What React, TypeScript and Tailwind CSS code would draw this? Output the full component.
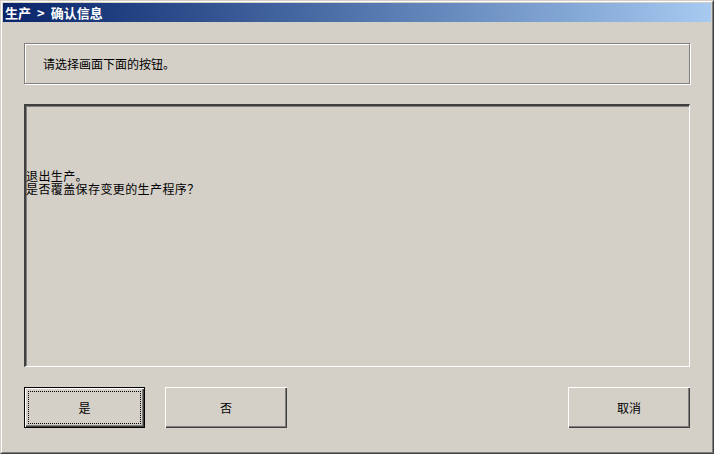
import React from "react";

const font = { fontFamily: '"Noto Sans CJK SC", "Noto Sans", sans-serif' };

function Btn({ label, def }: { label: string; def?: boolean }) {
  return (
    <button
      className={
        def
          ? "w-[121px] h-[41px] border border-black bg-[#d4d0c8] text-[12px] text-black shadow-[inset_1px_1px_0_#fff,inset_-1px_-1px_0_#404040,inset_-2px_-2px_0_#808080] outline-1 outline-dotted outline-black outline-offset-[-5px] flex items-center justify-center"
          : "w-[122px] h-[41px] bg-[#d4d0c8] text-[12px] text-black shadow-[inset_1px_1px_0_#fff,inset_-1px_-1px_0_#404040,inset_-2px_-2px_0_#808080] flex items-center justify-center"
      }
    >
      {label}
    </button>
  );
}

export default function App() {
  return (
    <div
      className="w-[714px] h-[454px] bg-[#d4d0c8] border border-t-[#d4d0c8] border-l-[#d4d0c8] border-r-[#404040] border-b-[#404040]"
      style={font}
    >
      <div className="w-full h-full border border-t-white border-l-white border-r-[#808080] border-b-[#808080] p-px flex flex-col">
        <div className="h-[19px] bg-gradient-to-r from-[#0a246a] to-[#a6caf0] flex items-center pl-[2px] text-white text-[13px] font-bold leading-none gap-[6px]">
          <span>生产</span>
          <span>&gt;</span>
          <span>确认信息</span>
        </div>
        <div className="flex flex-col px-[21px] pt-[21px]">
          <div className="h-[41px] border border-[#808080] shadow-[inset_1px_1px_0_#fff,1px_1px_0_#fff] flex items-center pl-[18px] text-[12px] text-black">
            请选择画面下面的按钮。
          </div>
          <div className="mt-[20px] h-[263px] border-t-2 border-l-2 border-t-[#404040] border-l-[#404040] border-b border-r border-b-white border-r-white shadow-[inset_1px_1px_0_#808080] pt-[63px] text-[12px] leading-[13px] tracking-[0.4px] text-black">
            <div>退出生产。</div>
            <div>是否覆盖保存变更的生产程序？</div>
          </div>
          <div className="mt-[20px] flex items-center gap-[20px]">
            <Btn label="是" def />
            <Btn label="否" />
            <div className="flex-1" />
            <Btn label="取消" />
          </div>
        </div>
      </div>
    </div>
  );
}
